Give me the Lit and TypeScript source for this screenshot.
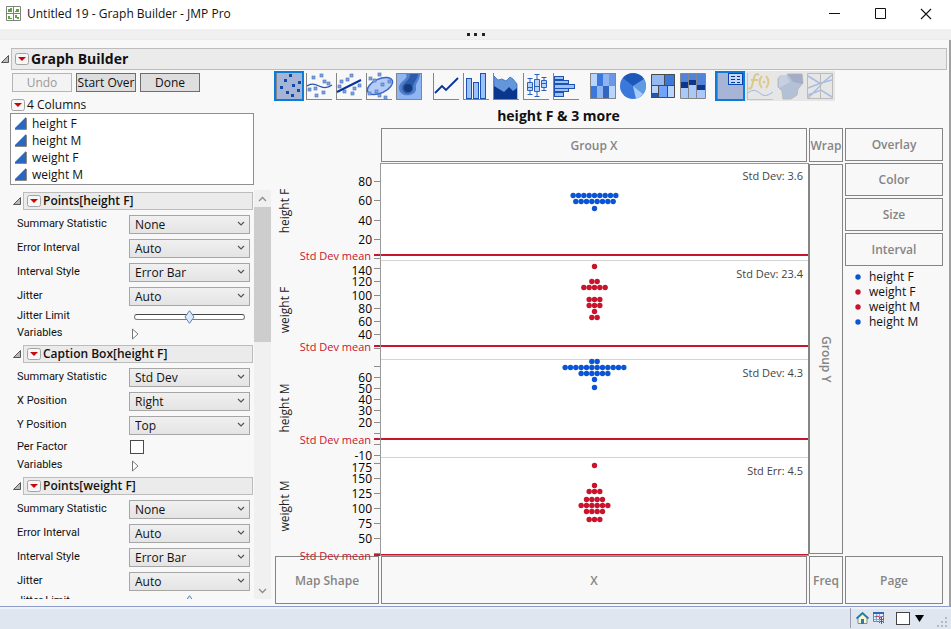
import { LitElement, html, css, svg, nothing } from "lit";
import { customElement } from "lit/decorators.js";

const BLUE = "#0a55d6";
const RED = "#c8142c";

interface Field {
  label: string;
  kind: "select" | "slider" | "check" | "more";
  value?: string;
}
interface Section {
  title: string;
  fields: Field[];
}

const pointFields: Field[] = [
  { label: "Summary Statistic", kind: "select", value: "None" },
  { label: "Error Interval", kind: "select", value: "Auto" },
  { label: "Interval Style", kind: "select", value: "Error Bar" },
  { label: "Jitter", kind: "select", value: "Auto" },
  { label: "Jitter Limit", kind: "slider" },
  { label: "Variables", kind: "more" },
];

const sections: Section[] = [
  { title: "Points[height F]", fields: pointFields },
  {
    title: "Caption Box[height F]",
    fields: [
      { label: "Summary Statistic", kind: "select", value: "Std Dev" },
      { label: "X Position", kind: "select", value: "Right" },
      { label: "Y Position", kind: "select", value: "Top" },
      { label: "Per Factor", kind: "check" },
      { label: "Variables", kind: "more" },
    ],
  },
  { title: "Points[weight F]", fields: pointFields },
];

// Vertical positions below are measured from the top of the plot row.
interface Panel {
  name: string;
  nameY: number;
  color: string;
  caption: string;
  captionY: number;
  meanY: number;
  endY?: number;
  ticks: [number, string?, number?][];
  rows: [number, number][];
}
const panels: Panel[] = [
  {
    name: "height F", nameY: 47, color: BLUE, caption: "Std Dev: 3.6", captionY: 12, meanY: 91, endY: 96,
    ticks: [[17, "80"], [36, "60"], [56, "40"], [75, "20"], [94]],
    rows: [[31, 9], [37, 8], [44, 1]],
  },
  {
    name: "weight F", nameY: 146, color: RED, caption: "Std Dev: 23.4", captionY: 110, meanY: 182, endY: 195,
    ticks: [[104, "140", 106], [117, "120"], [131, "100"], [144, "80"], [157, "60"], [170, "40"], [184]],
    rows: [[102, 1], [117, 2], [123, 5], [135, 3], [141, 3], [147, 1], [153, 2]],
  },
  {
    name: "height M", nameY: 244, color: BLUE, caption: "Std Dev: 4.3", captionY: 209, meanY: 275, endY: 293,
    ticks: [[202], [213, "60"], [224, "50"], [235, "40"], [246, "30"], [258, "20"], [269], [280], [291, "-10"]],
    rows: [[197, 2], [203, 12], [209, 6], [215, 1], [223, 1]],
  },
  {
    name: "weight M", nameY: 342, color: RED, caption: "Std Err: 4.5", captionY: 307, meanY: 391,
    ticks: [[299, "175", 303], [314, "150"], [329, "125"], [344, "100"], [359, "75"], [374, "50"], [389]],
    rows: [[301, 1], [321, 1], [327, 3], [335, 4], [341, 6], [347, 4], [355, 3]],
  },
];

const legend: [string, string][] = [
  ["height F", BLUE],
  ["weight F", RED],
  ["weight M", RED],
  ["height M", BLUE],
];

const frame = svg`<path d="M2.5 2v26M2 28.5h26" stroke="#858585" fill="none"/>`;
const dot = (x: number, y: number) =>
  svg`<rect x=${x} y=${y} width="3" height="3" fill="#7fa4e6" stroke="#4a6fb5" stroke-width=".6"/>`;
const darkDot = (x: number, y: number) =>
  svg`<rect x=${x} y=${y} width="3" height="3" fill="#0f47b3"/>`;
const dots = (list: number[][]) => list.map(([x, y]) => dot(x, y));
const box = (x: number, y: number, w: number, h: number, f: string) =>
  svg`<rect x=${x} y=${y} width=${w} height=${h} fill=${f}/>`;
const bar = (x: number, y: number, w: number, h: number) =>
  svg`<rect x=${x + 0.5} y=${y + 0.5} width=${w - 1} height=${h - 1} fill="#9cc2fa" stroke="#1d53b0"/>`;

interface Tool { name: string; art: unknown; state?: "on" | "off"; }
const toolGroups: Tool[][] = [
  [
    {
      name: "Points", state: "on",
      art: svg`${frame}${[[15, 3], [10, 8], [24, 10], [6, 15], [18, 13], [23, 18], [12, 20], [17, 23]].map(([x, y]) => darkDot(x, y))}`,
    },
    {
      name: "Smoother",
      art: svg`${frame}${dots([[8, 5], [16, 3], [19, 9], [23, 11], [4, 17], [10, 16], [18, 20], [11, 23]])}
        <path d="M3 15C7 12 11 13 15 15S24 17 28 14" stroke="#2a56a8" stroke-width="1.2" fill="none"/>`,
    },
    {
      name: "Line of fit",
      art: svg`${frame}${dots([[16, 3], [6, 9], [12, 7], [4, 14], [24, 13], [9, 19], [19, 16], [17, 21]])}
        <path d="M3 21L27 9" stroke="#06349c" stroke-width="2" fill="none"/>`,
    },
    {
      name: "Ellipse",
      art: svg`${frame}<ellipse cx="16" cy="15" rx="13.5" ry="7" transform="rotate(-25 16 15)" fill="#b4ccf6" stroke="#3467cc" stroke-width="1.4"/>
        ${dots([[14, 2], [5, 6], [9, 8], [17, 12], [11, 19], [4, 21], [14, 23], [20, 25], [24, 9]])}`,
    },
    {
      name: "Contour",
      art: svg`<rect x="2.5" y="2.5" width="25" height="26" fill="#8fb5f3" stroke="#858585"/>
        <path d="M12 3C15 9 4 10 5 18C6 27 23 26 22 17C21 12 26 9 26 3z" fill="#527fc9"/>
        <path d="M16 3C17 9 8 12 8 17C9 25 20 24 19 16C19 11 24 8 24 3z" fill="#2b5ba9"/>
        <circle cx="14" cy="17" r="4" fill="#143a7c"/>`,
    },
  ],
  [
    { name: "Line", art: svg`${frame}<path d="M4 22L11 15L15 19L27 7" stroke="#06349c" stroke-width="1.8" fill="none"/>` },
    { name: "Bar", art: svg`${frame}${bar(5, 7, 6, 21)}${bar(12, 11, 6, 17)}${bar(19, 2, 6, 26)}` },
    {
      name: "Area",
      art: svg`<path d="M3 5L7 9L11 8L15 10L19 6L22 8L26 13V28H3z" fill="#6496dc" stroke="#3a6cba" stroke-width=".8"/>
        <path d="M3 15L8 18L13 21L18 16L22 20L26 17V28H3z" fill="#0a378c"/>${frame}`,
    },
    {
      name: "Box plot",
      art: svg`${frame}<g stroke="#2c62bc" fill="#b9d2fb"><path d="M9 7V24M6.500 7.500h5M6.500 23.500h5M16 3V26M13.500 3.500h5M13.500 25.500h5M23 6V20M20.500 6.500h5M20.500 19.500h5"/>
        <path d="M6.500 11.500h5v8h-5zM6.500 16.500h5M13.500 8.500h5v12h-5zM13.500 15.500h5M20.500 9.500h5v7h-5zM20.500 12.500h5"/></g>`,
    },
    { name: "Histogram", art: svg`${bar(3, 5, 10, 4)}${bar(3, 9, 15, 4)}${bar(3, 13, 21, 5)}${bar(3, 17, 15, 4)}${bar(3, 21, 10, 5)}${frame}` },
  ],
  [
    {
      name: "Heatmap",
      art: svg`${box(2, 2, 26, 26, "#3a78dc")}${box(2, 2, 7, 13, "#b9d4fd")}${box(15, 2, 7, 13, "#8fb4f2")}${box(21, 2, 7, 13, "#6a98e2")}
        ${box(9, 15, 6, 13, "#8fb4f2")}${box(21, 15, 7, 13, "#b9d4fd")}${box(15, 15, 6, 13, "#3265bf")}
        <rect x="2.5" y="2.5" width="25" height="25" fill="none" stroke="#858585"/>`,
    },
    {
      name: "Pie",
      art: svg`<circle cx="15" cy="15" r="13" fill="#3a78dc"/><path d="M15 15L5 7A13 13 0 0 1 26 8z" fill="#1f57b8"/>
        <path d="M15 15L26 8A13 13 0 0 1 25 23z" fill="#5f9be2"/><path d="M15 15L25 23A13 13 0 0 1 18 28z" fill="#a8cbfb"/>`,
    },
    {
      name: "Treemap",
      art: svg`${box(3, 3, 24, 24, "#97b9f2")}${box(17, 3, 10, 11, "#3a78dc")}${box(3, 15, 7, 8, "#b9d4fd")}${box(3, 23, 7, 4, "#1f57b8")}${box(10, 14, 10, 13, "#70a3fc")}${box(20, 14, 7, 13, "#b9d4fd")}
        <path d="M3.500 3.500h23v23h-23zM3 14.500h24M16.500 3v11M10.500 14v12M19.500 14v12M4 22.500h6" fill="none" stroke="#4a4a4a"/>`,
    },
    {
      name: "Mosaic",
      art: svg`${box(3, 3, 24, 24, "#a9c8fc")}${box(3, 3, 24, 9, "#4f83dc")}${box(3, 11, 8, 6, "#0a3690")}${box(11, 9, 8, 5, "#0a3690")}${box(19, 14, 8, 5, "#0a3690")}${box(19, 11, 8, 3, "#4f83dc")}
        <path d="M2.500 2.500h25v25h-25zM10.500 2v26M18.500 2v26" fill="none" stroke="#858585"/>`,
    },
  ],
  [
    {
      name: "Caption box", state: "on",
      art: svg`${frame}<rect x="13.500" y="2.500" width="14" height="11" fill="#c3d8fa" stroke="#0a45b8"/>
        <path d="M16 5.500h4M22 5.500h3M16 8.500h4M22 8.500h3M16 11.500h4M22 11.500h3" stroke="#0a378c"/>`,
    },
    {
      name: "Formula", state: "off",
      art: svg`<path d="M2.500 2v26M2 28.500h26" stroke="#c4c4c4"/><path d="M14 4C10 1 9 6 8 11S6 19 3 17M6 9h7M17 5Q12 11 17 17M21 5Q26 11 21 17" fill="none" stroke="#dcca8c" stroke-width="2"/>
        <circle cx="19" cy="11" r="1.500" fill="#dcca8c"/><path d="M3 22C8 17 12 20 16 23S24 24 28 21" stroke="#9fb6dc" fill="none"/>`,
    },
    {
      name: "Map shapes", state: "off",
      art: svg`<path d="M3 8L5 5H13L12 3H27L28 12L23 18L22 24L16 28H8L7 20L3 16z" fill="#b4c0d6" stroke="#bbb"/>
        <path d="M13 3H27L28 13L18 11z" fill="#a3aec4"/><path d="M4 8L5 5H12L15 11L4 17z" fill="#c7d0e2"/>`,
    },
    {
      name: "Parallel", state: "off",
      art: svg`<path d="M3 5L16 13L27 4M3 17L16 12L27 9M3 24L16 19L27 26M3 27L16 14" fill="none" stroke="#a9bddf" stroke-width="1.500"/>
        <path d="M2.500 2.500h25v25h-25zM15.500 3v25" stroke="#bbb" fill="none"/>`,
    },
  ],
];

const shared = css`
  :host {
    font-family: "Open Sans", "Noto Sans", sans-serif;
    font-size: 12px;
    line-height: 16px;
    color: #111;
  }
  * { box-sizing: border-box; }
  svg { display: block; flex: none; }
  button {
    font: inherit;
    color: inherit;
    padding: 0;
    border: 0;
    background: none;
  }
  h1, h2 { margin: 0; }
`;

@customElement("outline-header")
export class OutlineHeader extends LitElement {
  static properties = { text: {}, large: { type: Boolean } };
  declare text: string;
  declare large: boolean;

  static styles = [
    shared,
    css`
      :host { display: flex; align-items: center; }
      .fold { width: 11px; height: 10px; flex: none; }
      .bar {
        flex: 1;
        display: flex;
        align-items: center;
        gap: 2px;
        height: 18px;
        padding-left: 3px;
        border: 1px solid #bcbcbc;
        background: #ebebeb;
      }
      .bar.large { height: 22px; }
      h1 { font-size: 14px; line-height: 18px; font-weight: 700; }
      h2 { font-size: 12px; line-height: 16px; font-weight: 600; }
    `,
  ];

  render() {
    return html`
      <button class="fold" aria-label="Collapse ${this.text}">
        <svg width="11" height="10"><path d="M1.500 8.500H8.500V1.500z" fill="#b8b8b8" stroke="#555" /></svg>
      </button>
      <div class="bar ${this.large ? "large" : ""}">
        <menu-mark></menu-mark>
        ${this.large ? html`<h1>${this.text}</h1>` : html`<h2>${this.text}</h2>`}
      </div>
    `;
  }
}

@customElement("menu-mark")
export class MenuMark extends LitElement {
  static styles = [shared, css`:host, button { display: block; }`];
  render() {
    return html`<button aria-label="Options">
      <svg width="14" height="12">
        <rect x=".5" y=".5" width="13" height="11" rx="2" fill="#f6f6f6" stroke="#a3a3a3" />
        <path d="M3 4H11L7 8z" fill="#c80808" />
      </svg>
    </button>`;
  }
}

@customElement("control-panel")
export class ControlPanel extends LitElement {
  static styles = [
    shared,
    css`
      :host { display: flex; flex-direction: column; min-height: 0; padding: 3px 0 7px; }
      .actions { display: flex; gap: 4px; padding-left: 12px; }
      .actions button {
        width: 60px;
        height: 19px;
        border: 1px solid #6d6d6d;
        background: #dedede;
        line-height: 16px;
        white-space: nowrap;
      }
      .actions button:disabled { color: #9a9a9a; background: #f3f3f3; border-color: #b5b5b5; }
      .count { display: flex; align-items: center; gap: 2px; height: 16px; margin: 5px 0 0 11px; }
      .columns {
        list-style: none;
        margin: 0 17px 0 10px;
        padding: 1px 4px;
        border: 1px solid #8f8f8f;
        background: #fff;
        height: 72px;
      }
      .columns li { display: flex; align-items: center; gap: 5px; height: 17px; }
      .scroller { flex: 1; display: flex; min-height: 0; margin-top: 5px; }
      .sections { flex: 1; min-width: 0; overflow: hidden; padding: 2px 1px 0 12px; }
      .section { margin-bottom: 3px; }
      .fields { padding: 2px 3px 0 5px; }
      .field { display: grid; grid-template-columns: 112px minmax(0, 1fr); align-items: center; height: 17px; }
      .field.select { height: 24px; }
      .field.check { height: 20px; }
      .field label, .field .name {
        padding-bottom: 1px;
        font-family: Roboto, "Open Sans", sans-serif;
        font-size: 11px;
        line-height: 14px;
      }
      .pick { display: grid; align-items: center; }
      .pick > * { grid-area: 1 / 1; }
      .pick svg { justify-self: end; margin-right: 5px; pointer-events: none; }
      select {
        appearance: none;
        width: 100%;
        height: 19px;
        margin: 0;
        padding: 0 5px;
        border: 1px solid #a6a6a6;
        border-radius: 0;
        background: linear-gradient(#f0f0f0, #e4e4e4);
        color: inherit;
        font: inherit;
        line-height: 17px;
      }
      input[type="range"] {
        appearance: none;
        min-width: 0;
        height: 15px;
        margin: 0 5px;
        background: none;
      }
      input[type="range"]::-webkit-slider-runnable-track {
        height: 6px;
        border: 1px solid #7c7c7c;
        border-top-color: #444;
        border-radius: 3px;
        background: #fff;
      }
      input[type="range"]::-webkit-slider-thumb {
        appearance: none;
        width: 11px;
        height: 14px;
        margin-top: -5px;
        background: url("data:image/svg+xml,%3Csvg xmlns='http://www.w3.org/2000/svg' width='11' height='14'%3E%3Cpath d='M5.500 .7L10 7L5.500 13.300L1 7z' fill='%23dceafb' stroke='%235f81b5'/%3E%3C/svg%3E");
      }
      input[type="checkbox"] {
        appearance: none;
        width: 14px;
        height: 14px;
        margin: 0 1px;
        border: 1px solid #4a4a4a;
        background: #fff;
      }
      .more { width: 12px; margin-left: 2px; }
      .scrollbar { width: 17px; display: flex; flex-direction: column; background: #f0f0f0; }
      .scrollbar button { height: 17px; display: grid; place-items: center; }
      .thumb { height: 135px; background: #cdcdcd; }
      .rest { flex: 1; }
    `,
  ];

  private field(f: Field, id: string) {
    if (f.kind === "select") {
      return html`<div class="field select">
        <label for=${id}>${f.label}</label>
        <span class="pick">
          <select id=${id}><option>${f.value}</option></select>
          <svg width="8" height="6"><path d="M1 1L4 4L7 1" fill="none" stroke="#555" stroke-width="1.200" /></svg>
        </span>
      </div>`;
    }
    if (f.kind === "slider") {
      return html`<div class="field"><label for=${id}>${f.label}</label><input id=${id} type="range" value="50" /></div>`;
    }
    if (f.kind === "check") {
      return html`<div class="field check"><label for=${id}>${f.label}</label><input id=${id} type="checkbox" /></div>`;
    }
    return html`<div class="field">
      <span class="name">${f.label}</span>
      <button class="more" aria-label="Show variables">
        <svg width="9" height="12"><path d="M1.500 1L7 6L1.500 11z" fill="#fff" stroke="#777" /></svg>
      </button>
    </div>`;
  }

  render() {
    return html`
      <div class="actions">
        <button disabled>Undo</button><button>Start Over</button><button>Done</button>
      </div>
      <div class="count"><menu-mark></menu-mark>4 Columns</div>
      <ul class="columns">
        ${["height F", "height M", "weight F", "weight M"].map(
          (name) => html`<li>
            <svg width="12" height="13"><path d="M0 12V11L11 0V12z" fill="#2b67bd" /><path d="M0 12.500H11.500V1" fill="none" stroke="#8a8a8a" /></svg>
            ${name}
          </li>`,
        )}
      </ul>
      <div class="scroller">
        <div class="sections">
          ${sections.map(
            (s, i) => html`<section class="section">
              <outline-header .text=${s.title}></outline-header>
              <div class="fields">${s.fields.map((f, j) => this.field(f, `field-${i}-${j}`))}</div>
            </section>`,
          )}
        </div>
        <div class="scrollbar">
          <button aria-label="Scroll up"><svg width="9" height="6"><path d="M1 5L4.500 1.500L8 5" fill="none" stroke="#8c8c8c" stroke-width="1.300" /></svg></button>
          <div class="thumb"></div>
          <div class="rest"></div>
          <button aria-label="Scroll down"><svg width="9" height="6"><path d="M1 1L4.500 4.500L8 1" fill="none" stroke="#8c8c8c" stroke-width="1.300" /></svg></button>
        </div>
      </div>
    `;
  }
}

@customElement("graph-area")
export class GraphArea extends LitElement {
  static styles = [
    shared,
    css`
      :host { display: flex; flex-direction: column; min-width: 0; padding: 1px 8px 2px 3px; }
      .tools { display: flex; gap: 7px; }
      .group { display: flex; }
      .tool { width: 30px; height: 30px; }
      .tool.on { background: #a6b5d5; outline: 2px solid #0f7bd8; outline-offset: -2px; }
      .tool.off { background: #e6e6e6; }
      .title {
        padding-right: 100px;
        height: 27px;
        line-height: 29px;
        font-size: 14px;
        font-weight: 700;
        text-align: center;
      }
      .grid {
        flex: 1;
        display: grid;
        grid-template-columns: 104px minmax(0, 1fr) 34px 98px;
        grid-template-rows: 34px minmax(390px, 1fr) 48px;
        gap: 2px;
        margin-left: 1px;
      }
      .zone {
        display: grid;
        place-items: center;
        padding-top: 1px;
        border: 1px solid #858585;
        color: #858585;
        font-weight: 600;
      }
      .wrap { grid-column: 3; }
      .groupx { grid-column: 2; }
      .side { grid-area: 1 / 4 / 3 / 5; display: flex; flex-direction: column; gap: 2px; }
      .side .zone { height: 33px; }
      .turned { writing-mode: vertical-rl; }
      .legend { list-style: none; margin: 0; padding: 1px 10px; }
      .legend li { display: flex; align-items: center; gap: 8px; height: 15px; }
      .axis { grid-area: 2 / 1; width: 106px; height: 100%; overflow: visible; z-index: 1; }
      .plot { grid-area: 2 / 2; margin: -1px -2px -2px -1px; border: 1px solid #999; border-right-color: #858585; background: #fff; min-width: 0; }
      .plot svg { width: 100%; height: 100%; }
      .caption { font-size: 11px; fill: #444; }
      .mean { font-size: 11px; fill: #c8142c; }
    `,
  ];

  private axis() {
    return html`<svg class="axis">
      ${panels.map(
        (p) => svg`
          <text transform="translate(14 ${p.nameY}) rotate(-90)" text-anchor="middle" fill="#222">${p.name}</text>
          ${p.ticks.map(
            ([y, label, labelY]) => svg`
              <path d="M99 ${y + 0.5}H105" stroke="#8c8c8c"/>
              ${label ? svg`<text x="97" y=${(labelY ?? y) + 5} text-anchor="end">${label}</text>` : nothing}`,
          )}
          <path d="M99 ${p.meanY}H105" stroke=${RED} stroke-width="2"/>
          <text class="mean" x="96" y=${p.meanY + 5} text-anchor="end">Std Dev mean</text>`,
      )}
    </svg>`;
  }

  private plot() {
    return html`<div class="plot">
      <svg>
        ${panels.map(
          (p) => svg`
            ${p.endY ? svg`<line x1="0" x2="100%" y1=${p.endY + 0.5} y2=${p.endY + 0.5} stroke="#d4d4d4"/>` : nothing}
            <line x1="0" x2="100%" y1=${p.meanY} y2=${p.meanY} stroke=${RED} stroke-width="2"/>
            <svg x="50%" overflow="visible">
              ${p.rows.map(([y, n]) =>
                Array.from({ length: n }, (_, i) =>
                  svg`<circle cx=${((i - (n - 1) / 2) * 16) / 3} cy=${y + 0.5} r="2.700" fill=${p.color}/>`),
              )}
            </svg>
            <svg x="100%" overflow="visible"><text class="caption" x="-5" y=${p.captionY + 4} text-anchor="end">${p.caption}</text></svg>`,
        )}
      </svg>
    </div>`;
  }

  render() {
    return html`
      <div class="tools" role="toolbar">
        ${toolGroups.map(
          (g) => html`<div class="group">
            ${g.map(
              (t) => html`<button class="tool ${t.state ?? ""}" aria-label=${t.name} ?disabled=${t.state === "off"}>
                <svg width="30" height="30">${t.art}</svg>
              </button>`,
            )}
          </div>`,
        )}
      </div>
      <div class="title">height F &amp; 3 more</div>
      <div class="grid">
        <div class="zone groupx">Group X</div>
        <div class="zone wrap">Wrap</div>
        <div class="side">
          ${["Overlay", "Color", "Size", "Interval"].map((z) => html`<div class="zone">${z}</div>`)}
          <ul class="legend">
            ${legend.map(([name, color]) => html`<li><svg width="6" height="6"><circle cx="3" cy="3" r="2.700" fill=${color} /></svg>${name}</li>`)}
          </ul>
        </div>
        ${this.axis()} ${this.plot()}
        <div class="zone wrap"><span class="turned">Group Y</span></div>
        <div class="zone">Map Shape</div>
        <div class="zone">X</div>
        <div class="zone">Freq</div>
        <div class="zone">Page</div>
      </div>
    `;
  }
}

@customElement("app-root")
export class AppRoot extends LitElement {
  static styles = [
    shared,
    css`
      :host {
        display: flex;
        flex-direction: column;
        height: 100vh;
        min-height: 620px;
        background: #f8f8f8;
      }
      .titlebar { display: flex; align-items: center; height: 29px; padding: 0 2px 2px 6px; background: #fff; }
      .titlebar .name { flex: 1; padding-left: 6px; }
      .titlebar button { width: 46px; height: 27px; display: grid; place-items: center; }
      .grip { display: grid; place-items: center; height: 11px; background: #f0f0f0; border-bottom: 1px solid #ebebeb; }
      .body { flex: 1; min-height: 0; display: flex; flex-direction: column; padding-top: 8px; border-right: 2px solid #a0a0a0; }
      .head { margin-right: 2px; }
      .work { flex: 1; min-height: 0; display: grid; grid-template-columns: 271px minmax(0, 1fr); margin-right: -2px; }
      .status {
        display: flex;
        align-items: center;
        justify-content: flex-end;
        height: 23px;
        border-top: 1px solid #8f9cc8;
        box-shadow: inset 0 2px #eef2fa;
        background: #dfe6f0;
        padding: 0 3px 0 0;
      }
      .rule { width: 1px; height: 20px; background: #9c9cb4; margin-right: 5px; }
      .status button { margin-right: 4px; }
      .status input { appearance: none; width: 14px; height: 13px; margin: 0 5px 0 7px; border: 1px solid #444; background: #fff; }
      .corner { margin-left: 8px; align-self: flex-end; }
    `,
  ];

  render() {
    return html`
      <header class="titlebar">
        <svg width="15" height="15">
          <path d="M.5 .5h14v14h-14zM7.500 0v15M0 7.500h15" fill="#fff" stroke="#808080" />
          <path d="M2 3h2v2h-2zM4 2h2v4h-4v-1h2zM9 5h1v-2h3v3h-4zM2 10h2v2h2v1h-4zM9 9h2v2h2v2h-2v-1h-2z" fill="#5da63c" />
        </svg>
        <span class="name">Untitled 19 - Graph Builder - JMP Pro</span>
        <button aria-label="Minimize"><svg width="11" height="11"><path d="M0 5.500h11" stroke="#111" /></svg></button>
        <button aria-label="Maximize"><svg width="11" height="11"><path d="M.5 .5h10v10h-10z" fill="none" stroke="#111" /></svg></button>
        <button aria-label="Close"><svg width="12" height="12"><path d="M1 1L11 11M11 1L1 11" stroke="#111" stroke-width="1.100" /></svg></button>
      </header>
      <div class="grip"><svg width="18" height="3"><path d="M0 0h3v3h-3zM7 0h3v3h-3zM15 0h3v3h-3z" fill="#222" /></svg></div>
      <main class="body">
        <outline-header class="head" large .text=${"Graph Builder"}></outline-header>
        <div class="work">
          <control-panel></control-panel>
          <graph-area></graph-area>
        </div>
      </main>
      <footer class="status">
        <span class="rule"></span>
        <button aria-label="Home">
          <svg width="13" height="12"><path d="M2 6V11.500H11V6L6.500 2z" fill="#fff6d0" stroke="#6a93a8" /><path d="M.5 6.500L6.500 1L12.500 6.500" fill="none" stroke="#237fa6" stroke-width="1.800" /><path d="M5 7h3v5h-3z" fill="#2b7dac" /></svg>
        </button>
        <button aria-label="Data table">
          <svg width="12" height="12"><path d="M.5 .5h10v9h-10z" fill="#e8f2ff" stroke="#4f86cc" /><path d="M0 1h11" stroke="#2c69bd" stroke-width="2" /><path d="M3.500 2v8M6.500 2v8M1 4.500h9M1 7.500h9" stroke="#7ca7dd" /><path d="M2 5l3-1l2 2l3-2" fill="none" stroke="#b04858" /><path d="M6 6l5 5M11 6l-5 5M8.500 5v7" stroke="#1e70b0" /></svg>
        </button>
        <input type="checkbox" aria-label="Select window" />
        <button aria-label="Window list"><svg width="9" height="7"><path d="M0 0H9L4.500 7z" fill="#000" /></svg></button>
        <svg class="corner" width="12" height="13"><path d="M9 1h2v2h-2zM9 5h2v2h-2zM9 9h2v2h-2zM5 5h2v2h-2zM5 9h2v2h-2zM1 9h2v2h-2z" fill="#b2bac8" /></svg>
      </footer>
    `;
  }
}
